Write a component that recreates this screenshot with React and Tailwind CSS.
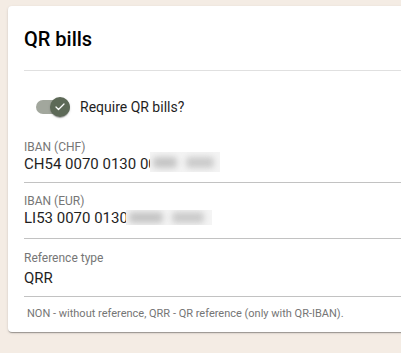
import { Check } from 'lucide-react'

// blurred-out part of an account number
const Redacted = ({ className, first, second }) => (
  <span className={`absolute flex items-center gap-[9px] overflow-hidden bg-[#f4f4f4] pl-[3px] ${className}`}>
    <span className={`block h-[11px] rounded-sm bg-[#c4c4c4] blur-[3px] ${first}`} />
    <span className={`block h-[11px] rounded-sm bg-[#cacaca] blur-[3px] ${second}`} />
  </span>
)

const Field = ({ label, value, redact, className = '', valueClass = '' }) => (
  <div className={`border-b border-[#c2c2c2] ${className}`}>
    <div className="text-xs leading-[13px] text-[#767676]">{label}</div>
    <div className={`relative text-[15px] leading-5 text-[#1f1f1f] ${valueClass}`}>
      {value}
      {redact}
    </div>
  </div>
)

const App = () => {
  return (
    <div className="h-[353px] w-[401px] overflow-hidden bg-[#f4ece4] pt-[6px] pl-2 font-['Roboto',sans-serif]">
      <div className="w-[440px] rounded bg-white px-4 pt-[17px] pb-[10px] shadow-[0_2px_1px_-1px_rgba(0,0,0,0.2),0_1px_1px_0_rgba(0,0,0,0.14),0_1px_3px_0_rgba(0,0,0,0.12)]">
        {/* Header */}
        <div className="border-b border-[#e0e0e0] pb-[15px]">
          <h2 className="text-xl leading-8 font-medium text-black">QR bills</h2>
        </div>

        {/* Toggle */}
        <div className="mt-[26px] flex items-center pl-3">
          <div className="relative flex h-5 w-[34px] items-center">
            <div className="h-[14px] w-[34px] rounded-full bg-[#a2a79d]" />
            <div className="absolute top-0 right-0 flex h-5 w-5 items-center justify-center rounded-full bg-[#5d6957] shadow-[0_2px_1px_-1px_rgba(0,0,0,0.2),0_1px_1px_0_rgba(0,0,0,0.14),0_1px_3px_0_rgba(0,0,0,0.12)]">
              <Check className="h-3 w-3 text-white" strokeWidth={2.5} />
            </div>
          </div>
          <span className="ml-[10px] text-sm leading-5 text-[#1f1f1f]">Require QR bills?</span>
        </div>

        {/* Fields */}
        <Field
          className="mt-6 pb-2"
          label="IBAN (CHF)"
          value="CH54 0070 0130 00"
          redact={<Redacted className="top-[-2px] left-[126px] h-5 w-[70px]" first="w-[24px]" second="w-[28px]" />}
        />
        <Field
          className="pt-3 pb-[10px]"
          label="IBAN (EUR)"
          value="LI53 0070 0130"
          redact={<Redacted className="top-[2px] left-[102px] h-[15px] w-[86px]" first="w-[34px]" second="w-[32px]" />}
        />
        <Field className="pt-[13px] pb-2" valueClass="mt-[3px]" label="Reference type" value="QRR" />

        <p className="mt-[9px] pl-[3px] text-[11px] leading-4 text-[#757575]">
          NON - without reference, QRR - QR reference (only with QR-IBAN).
        </p>
      </div>
    </div>
  )
}

export default App
